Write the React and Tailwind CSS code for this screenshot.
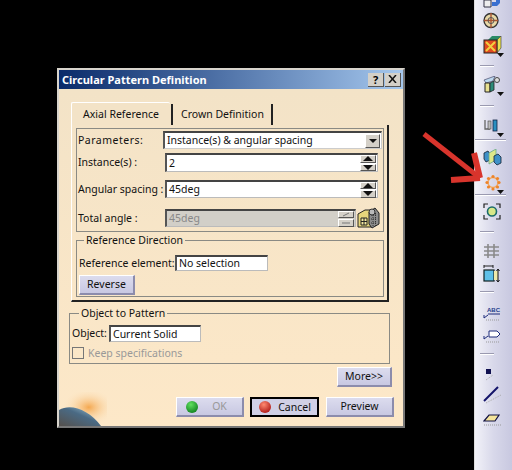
const FONT = "font-['Noto_Sans',sans-serif] text-[10.5px] leading-none text-[#111] whitespace-nowrap";

function Spin({ disabled }) {
  const c = disabled ? '#777' : '#111';
  return (
    <div className="flex flex-col w-[16px] h-[16px] gap-[1px] shrink-0">
      {[0, 1].map((i) => (
        <div key={i} className="flex-1 flex items-center justify-center bg-[#d4d0c8] border-t border-l border-white border-b border-r border-b-[#555] border-r-[#555]">
          <svg width="10" height="5" viewBox="0 0 10 5">
            {disabled
              ? <path d={i === 0 ? 'M2 4 L8 1' : 'M1 3 H9'} stroke={c} strokeWidth="1" fill="none" />
              : <path d={i === 0 ? 'M5 0 L10 5 H0Z' : 'M0 0 H10 L5 5Z'} fill={c} />}
          </svg>
        </div>
      ))}
    </div>
  );
}

function Field({ value, w, h }) {
  return (
    <div className={`flex items-center pl-[2px] pr-[1px] bg-white border-t-2 border-l-2 border-t-[#444] border-l-[#555] border-b border-r border-b-[#bbb] border-r-[#bbb] ${w} ${h}`}>
      <span>{value}</span>
    </div>
  );
}

function SpinField({ value, disabled, w, h }) {
  return (
    <div className={`flex items-center justify-between pl-[2px] pr-[1px] border-t-2 border-l-2 border-t-[#444] border-l-[#555] border-b border-r border-b-[#bbb] border-r-[#bbb] ${disabled ? 'bg-[#d2cfc8] text-[#888]' : 'bg-white'} ${w} ${h}`}>
      <span>{value}</span>
      <Spin disabled={disabled} />
    </div>
  );
}

function Btn({ children, w, mt, black }) {
  return (
    <div className={`flex items-center justify-center gap-[6px] ${w} ${black ? 'h-[20px] border-2 border-black bg-[#d0d0e6]' : 'h-[20px] bg-gradient-to-b from-[#dcdcee] to-[#c8c8e2] border-t border-l border-white border-b-2 border-r-2 border-b-[#8c8cac] border-r-[#8c8cac]'} ${mt || ''}`}>
      {children}
    </div>
  );
}

function Ball({ a, b, c }) {
  return (
    <svg width="14" height="14" viewBox="0 0 14 14">
      <defs>
        <radialGradient id={a} cx="0.4" cy="0.3" r="0.8">
          <stop offset="0" stopColor={b} />
          <stop offset="1" stopColor={c} />
        </radialGradient>
      </defs>
      <circle cx="7" cy="7" r="6" fill={`url(#${a})`} />
    </svg>
  );
}

function Sep({ mt, long }) {
  return <div className={`h-[2px] shrink-0 bg-[#9a9ab0] border-b border-white ${long ? 'w-[31px]' : 'w-[14px] ml-[5px]'} ${mt}`} />;
}

function Tri() {
  return <svg width="7" height="4" viewBox="0 0 7 4" className="absolute left-[14px] bottom-[-3px]"><path d="M0 0H7L3.5 4Z" fill="#111" /></svg>;
}

function Ic({ mt, h, children, tri }) {
  return (
    <div className={`relative shrink-0 ml-[8px] w-[20px] ${mt} ${h}`}>
      {children}
      {tri ? <Tri /> : null}
    </div>
  );
}

function Toolbar() {
  return (
    <div className="ml-auto w-[38px] h-[470px] flex flex-col overflow-hidden bg-gradient-to-r from-[#f2f2f8] via-[#d8d8ea] to-[#c8c8e0] border-l border-[#ddd]">
      <Ic mt="mt-0" h="h-[8px]">
        <svg width="20" height="8" viewBox="0 0 20 8"><path d="M1 0V7H8V0Z" fill="#eee" stroke="#334" /><path d="M9 2H13V0H17V3L14 6H9Z" fill="#3a6fd0" /></svg>
      </Ic>
      <Ic mt="mt-[4px]" h="h-[17px]">
        <svg width="18" height="17" viewBox="0 0 18 17"><circle cx="8" cy="8.5" r="7" fill="#e8d9a8" stroke="#333" strokeWidth="1.4" /><path d="M8 1V16M1 8.5H15" stroke="#a53" strokeWidth="1.4" /><circle cx="8" cy="8.5" r="3" fill="none" stroke="#555" /></svg>
      </Ic>
      <Ic mt="mt-[7px]" h="h-[18px]" tri>
        <svg width="20" height="18" viewBox="0 0 20 18"><path d="M5 4L9 0H18L14 4Z" fill="#2a8a66" /><path d="M14 4L18 0V12L14 17Z" fill="#e8e050" stroke="#333" strokeWidth=".6" /><rect x="1" y="4" width="13" height="13" fill="#e04a20" stroke="#222" /><path d="M3 6L12 15M12 6L3 15" stroke="#f0d040" strokeWidth="2" /></svg>
      </Ic>
      <Sep mt="mt-[11px]" />
      <Ic mt="mt-[9px]" h="h-[17px]" tri>
        <svg width="20" height="17" viewBox="0 0 20 17"><path d="M1 4L12 0L10 5L3 7Z" fill="#bcd8ee" stroke="#335" strokeWidth=".6" /><path d="M2 7H7V16H2Z" fill="#e8e090" stroke="#222" /><path d="M7 7L11 5V14L7 16Z" fill="#2c8a78" stroke="#222" strokeWidth=".8" /><circle cx="14" cy="4" r="2.5" fill="#ddd" stroke="#444" /></svg>
      </Ic>
      <Sep mt="mt-[12px]" />
      <Ic mt="mt-[12px]" h="h-[15px]" tri>
        <svg width="20" height="15" viewBox="0 0 20 15"><path d="M2 1V10H7" stroke="#666" fill="none" strokeWidth="1.3" /><rect x="5" y="2" width="3" height="8" fill="#bbb" stroke="#444" strokeWidth=".6" /><rect x="10" y="1" width="4" height="11" fill="#2a8fc0" stroke="#124" strokeWidth=".8" /></svg>
      </Ic>
      <Sep mt="mt-[5px]" long />
      <Ic mt="mt-[8px]" h="h-[17px]">
        <svg width="20" height="17" viewBox="0 0 20 17"><path d="M1 4L5 2L7 5V11L3 13L1 10Z" fill="#3f90c8" stroke="#123" strokeWidth=".8" /><path d="M6 4L13 0V11L6 15Z" fill="#dfe88a" stroke="#6a8" strokeWidth=".8" /><path d="M11 7L15 5L18 8V14L14 16L11 13Z" fill="#3f90c8" stroke="#123" strokeWidth=".8" /></svg>
      </Ic>
      <Ic mt="mt-[8px]" h="h-[17px]" tri>
        <svg width="20" height="17" viewBox="0 0 20 17">
          <circle cx="10" cy="8.5" r="5" fill="none" stroke="#f2a860" strokeWidth="1.4" />
          {[[10, 2.5], [14.5, 4.5], [16, 8.5], [14.5, 13], [10, 15], [5.5, 13], [4, 8.5], [5.5, 4.5]].map(([x, y], i) => <circle key={i} cx={x} cy={y} r="1.6" fill="#ee8428" />)}
        </svg>
      </Ic>
      <Sep mt="mt-[3px]" long />
      <Ic mt="mt-[7px]" h="h-[17px]">
        <svg width="19" height="17" viewBox="0 0 19 17"><circle cx="9" cy="8.5" r="4.500" fill="#d8e888" stroke="#1a6a6a" strokeWidth="1.6" /><path d="M1 5V1H5M13 1H17V5M17 12V16H13M5 16H1V12" fill="none" stroke="#222" strokeWidth="1.2" /></svg>
      </Ic>
      <Sep mt="mt-[11px]" />
      <Ic mt="mt-[10px]" h="h-[16px]">
        <svg width="18" height="16" viewBox="0 0 18 16"><path d="M1 4H16M1 8H16M1 12H16M5 1V15M11 1V15" stroke="#8a8a8a" strokeWidth="1.6" fill="none" /></svg>
      </Ic>
      <Ic mt="mt-[6px]" h="h-[17px]">
        <svg width="19" height="17" viewBox="0 0 19 17"><path d="M1 1H10M1 0V3M10 0V3" stroke="#222" fill="none" /><rect x="1" y="5" width="10" height="11" fill="#5ec0e8" stroke="#122" strokeWidth="1.2" /><rect x="11" y="6" width="4" height="9" fill="#f0eaa8" /><path d="M15 5V16M13.5 6L15 4L16.5 6M13.5 15L15 17L16.5 15" stroke="#111" fill="none" /></svg>
      </Ic>
      <Sep mt="mt-[9px]" />
      <Ic mt="mt-[12px]" h="h-[16px]">
        <svg width="20" height="16" viewBox="0 0 20 16"><text x="4" y="7" fontSize="6" fontWeight="700" fontFamily="Liberation Sans" fill="#1c3a8a">ABC</text><path d="M1 13L5 10M1 13V10M5 9H17" stroke="#1c2a7a" fill="none" /><path d="M3 15H16" stroke="#999" strokeDasharray="1 1" /></svg>
      </Ic>
      <Ic mt="mt-[7px]" h="h-[15px]">
        <svg width="18" height="15" viewBox="0 0 18 15"><path d="M6 3H14L17 6L14 9H6Z" fill="#fff" stroke="#1c2a7a" /><path d="M1 11L5 8M1 11V8" stroke="#1c2a7a" fill="none" /><path d="M3 14H16" stroke="#999" strokeDasharray="1 1" /></svg>
      </Ic>
      <Sep mt="mt-[10px]" />
      <Ic mt="mt-[14px]" h="h-[12px]">
        <svg width="14" height="12" viewBox="0 0 14 12"><rect x="3" y="0" width="5" height="5" fill="#101050" /><path d="M3 11L10 6" stroke="#aaa" strokeDasharray="1 1" /></svg>
      </Ic>
      <Ic mt="mt-[5px]" h="h-[18px]">
        <svg width="20" height="18" viewBox="0 0 20 18"><path d="M1 15L15 1" stroke="#14146a" strokeWidth="2" /><path d="M3 17L18 9" stroke="#aaa" strokeDasharray="1 1" /></svg>
      </Ic>
      <Ic mt="mt-[10px]" h="h-[12px]">
        <svg width="20" height="12" viewBox="0 0 20 12"><path d="M1 7L6 1H16L12 7Z" fill="#f4e49a" stroke="#101040" strokeWidth="1.2" /><path d="M1 11H18" stroke="#999" strokeDasharray="1 1" /></svg>
      </Ic>
    </div>
  );
}

function CalcIcon() {
  return (
    <svg width="23" height="22" viewBox="0 0 23 22" className="ml-[1px] shrink-0">
      <path d="M1 7L8 3H14V20H1Z" fill="#e6d67c" stroke="#222" />
      <path d="M4 11H10V18H4Z" fill="#f2e8a0" stroke="#222" />
      <path d="M7 11V18M4 14.5H10" stroke="#222" />
      <path d="M12 5L18 1L22 6V17L15 21L12 17Z" fill="#8c8c8c" stroke="#222" />
      <path d="M14 8H20M14 12H20M14 16H20M16 6V19M18.500 6V19" stroke="#333" strokeDasharray="1 1" />
      <circle cx="15" cy="5" r="3" fill="#bbb" stroke="#333" />
    </svg>
  );
}

export default function App() {
  return (
    <div className="relative w-[512px] h-[470px] bg-black overflow-hidden flex">
      <Toolbar />

      <svg width="70" height="60" viewBox="0 0 70 60" className="absolute left-[420px] top-[128px]">
        <path d="M4 6L60 50" stroke="#d8342c" strokeWidth="5" />
        <path d="M60 50L54 25M60 50L31 52" stroke="#d8342c" strokeWidth="6" />
      </svg>

      <div className={`absolute left-[57px] top-[68px] w-[348px] h-[360px] border-t-2 border-l-2 border-[#d8d4cc] border-r-2 border-b-2 border-r-[#777] border-b-[#777] ${FONT}`}>
        <div className="h-[19px] flex items-center pl-[3px] pr-[2px] bg-gradient-to-r from-[#0a2a6a] to-[#a6c8ee]">
          <span className="font-bold text-white text-[11px]">Circular Pattern Definition</span>
          <div className="ml-auto flex gap-[1px]">
            <div className="w-[16px] h-[14px] flex items-center justify-center bg-[#d4d0c8] border-b border-r border-[#555] font-bold text-[11px] text-black">?</div>
            <div className="w-[16px] h-[14px] flex items-center justify-center bg-[#d4d0c8] border-b border-r border-[#555]">
              <svg width="9" height="8" viewBox="0 0 9 8"><path d="M1 0L8 8M8 0L1 8" stroke="#111" strokeWidth="1.5" /></svg>
            </div>
          </div>
        </div>

        <div className="relative h-[337px] overflow-hidden bg-gradient-to-b from-[#f3e3c7] to-[#fde8c8] pt-[13px]">
          <svg width="48" height="34" viewBox="0 0 48 34" className="absolute left-0 bottom-0">
            <defs>
              <radialGradient id="glow" cx="0.62" cy="0.45" r="0.55"><stop offset="0" stopColor="#f4a850" /><stop offset="1" stopColor="#fde8c8" stopOpacity="0" /></radialGradient>
              <linearGradient id="pl" x1="0" y1="1" x2="1" y2="0"><stop offset="0" stopColor="#55504c" /><stop offset="0.55" stopColor="#4a6a84" /><stop offset="1" stopColor="#a8d0e0" /></linearGradient>
            </defs>
            <rect width="48" height="34" fill="url(#glow)" />
            <path d="M0 18C12 11 30 18 42 34H0Z" fill="url(#pl)" />
          </svg>

          <div className="relative flex ml-[12px] h-[23px]">
            <div className="w-[99px] flex items-center justify-center bg-[#f3e3c7] border-t border-l border-white rounded-t-[2px]"><span>Axial Reference</span></div>
            <div className="w-[102px] flex items-center justify-center pl-[1px] border-l-2 border-l-[#222] border-r-2 border-r-[#222] ml-[1px] mt-[2px]"><span>Crown Definition</span></div>
          </div>

          <div className="relative ml-[12px] w-[318px] h-[177px] pl-[4px] pt-[3px] border-r-2 border-b-2 border-[#222] border-l border-l-[#fff]">
            <div className="w-[308px] h-[104px] border border-[#8a8a84] px-[1px] pt-[2px]">
              <div className="flex items-center h-[18px]">
                <span className="w-[85px] tracking-[0.5px]">Parameters:</span>
                <div className="flex items-center justify-between w-[219px] h-[18px] pl-[2px] pr-[1px] bg-white border-t-2 border-l-2 border-t-[#444] border-l-[#555] border-b border-r border-b-[#ccc] border-r-[#ccc]">
                  <span>Instance(s) &amp; angular spacing</span>
                  <div className="w-[15px] h-[14px] flex items-center justify-center bg-[#d4d0c8] border-t border-l border-white border-b border-r border-b-[#555] border-r-[#555]">
                    <svg width="8" height="4" viewBox="0 0 8 4"><path d="M0 0H8L4 4Z" fill="#111" /></svg>
                  </div>
                </div>
              </div>
              <div className="flex items-center mt-[4px]">
                <span className="w-[87px]">Instance(s) :</span>
                <SpinField value="2" w="w-[213px]" h="h-[19px]" />
              </div>
              <div className="flex items-center mt-[8px]">
                <span className="w-[87px]">Angular spacing :</span>
                <SpinField value="45deg" w="w-[213px]" h="h-[18px]" />
              </div>
              <div className="flex items-center mt-[9px]">
                <span className="w-[87px]">Total angle :</span>
                <SpinField value="45deg" disabled w="w-[191px]" h="h-[18px]" />
                <CalcIcon />
              </div>
            </div>

            <fieldset className="w-[308px] h-[64px] mt-[1px] border border-[#8a8a84] pl-[2px]">
              <legend className="ml-[5px] px-[2px] leading-[14px]">Reference Direction</legend>
              <div className="flex items-center mt-[8px]">
                <span className="w-[96px]">Reference element:</span>
                <Field value="No selection" w="w-[93px]" h="h-[16px]" />
              </div>
              <Btn w="w-[56px]" mt="mt-[4px]">Reverse</Btn>
            </fieldset>
          </div>

          <fieldset className="relative ml-[10px] mt-[4px] w-[321px] h-[58px] border border-[#8a8a84] pl-[2px]">
            <legend className="ml-[7px] px-[2px] leading-[14px]">Object to Pattern</legend>
            <div className="flex items-center mt-[5px]">
              <span className="w-[37px]">Object:</span>
              <Field value="Current Solid" w="w-[92px]" h="h-[17px]" />
            </div>
            <div className="flex items-center mt-[5px] text-[#999]">
              <div className="w-[12px] h-[12px] border border-[#777] mr-[4px]" />
              <span>Keep specifications</span>
            </div>
          </fieldset>

          <div className="relative flex justify-end mt-[3px] pr-[11px]">
            <Btn w="w-[55px]">More&gt;&gt;</Btn>
          </div>

          <div className="relative flex mt-[10px] ml-[117px]">
            <Btn w="w-[68px]"><Ball a="g1" b="#60e060" c="#0a7a1a" /><span className="text-[#999] w-[30px] text-center">OK</span></Btn>
            <Btn w="w-[69px]" mt="ml-[6px]" black><Ball a="g2" b="#ff8a70" c="#a81010" /><span>Cancel</span></Btn>
            <Btn w="w-[68px]" mt="ml-[7px]"><span>Preview</span></Btn>
          </div>
        </div>
      </div>
    </div>
  );
}
